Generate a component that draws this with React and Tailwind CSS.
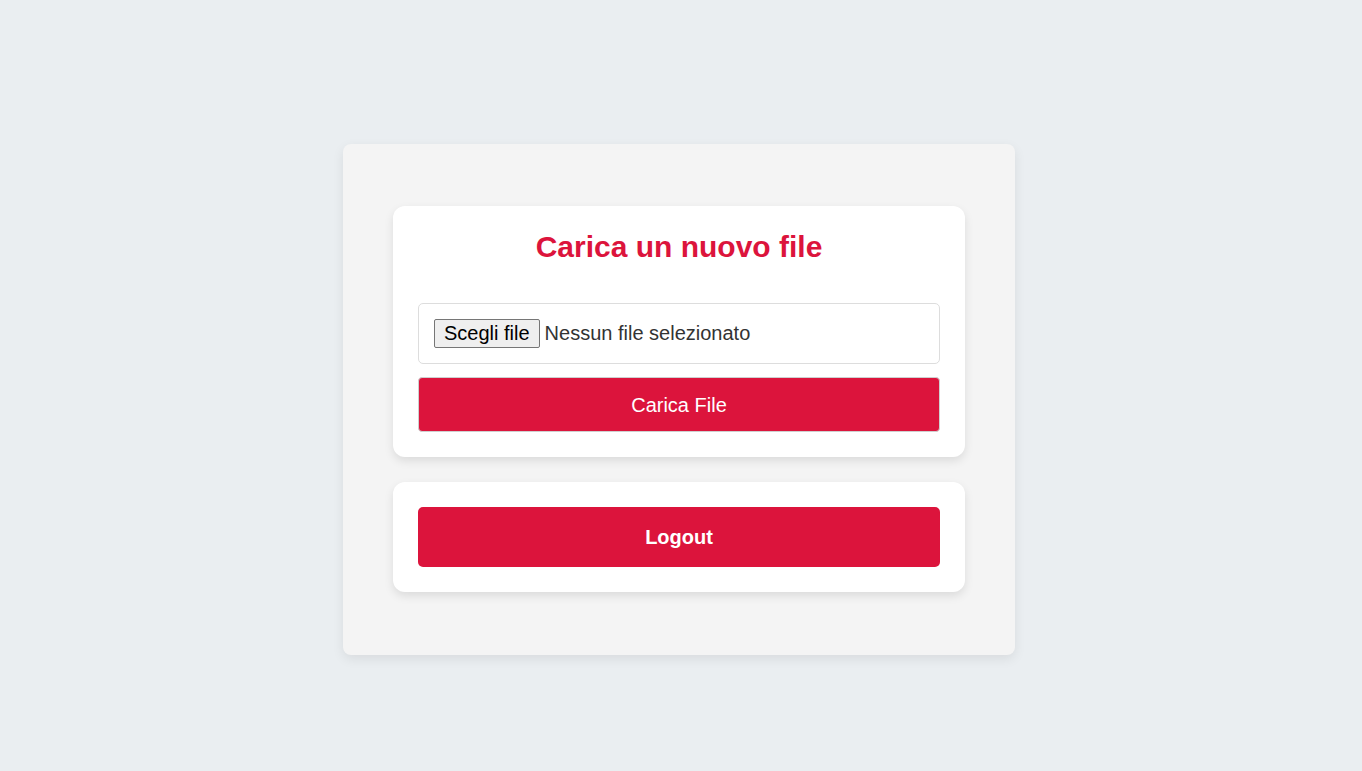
import React, { useRef, useState } from 'react'

const App = () => {
  const fileRef = useRef(null)
  const [fileName, setFileName] = useState('')

  return (
    <div
      className="min-h-[771px] bg-[#eaeef1] flex justify-center pt-[144px] pr-[4px]"
      style={{ fontFamily: '"Liberation Sans", Arial, sans-serif' }}
    >
      <div className="w-[672px] h-[511px] bg-[#f4f4f4] rounded-[8px] shadow-[0_4px_12px_rgba(0,0,0,0.08)] px-[50px] pt-[62px]">
        <div className="bg-white rounded-[12px] shadow-[0_4px_10px_rgba(0,0,0,0.1)] p-[25px]">
          <h2 className="text-[30px] leading-[32px] font-bold text-[#dc143c] text-center mb-[40px]">
            Carica un nuovo file
          </h2>
          <form onSubmit={(e) => e.preventDefault()}>
            <div className="flex items-center w-full bg-white border border-[#dddddd] rounded-[5px] p-[15px]">
              <input
                ref={fileRef}
                type="file"
                className="hidden"
                onChange={(e) => setFileName(e.target.files[0] ? e.target.files[0].name : '')}
              />
              <button
                type="button"
                onClick={() => fileRef.current && fileRef.current.click()}
                className="h-[29px] px-[9px] text-[20px] leading-[23px] text-black bg-[#efefef] border border-[#767676] rounded-[2px]"
              >
                Scegli file
              </button>
              <span className="ml-[5px] text-[20px] leading-[23px] text-[#333]">
                {fileName || 'Nessun file selezionato'}
              </span>
            </div>
            <button
              type="submit"
              className="mt-[13px] w-full h-[55px] bg-[#dc143c] text-white text-[20px] border border-[#cfcfcf] rounded-[4px]"
            >
              Carica File
            </button>
          </form>
        </div>
        <div className="mt-[25px] bg-white rounded-[12px] shadow-[0_4px_10px_rgba(0,0,0,0.1)] p-[25px]">
          <button
            type="button"
            className="w-full h-[60px] bg-[#dc143c] text-white text-[20px] font-bold rounded-[5px]"
          >
            Logout
          </button>
        </div>
      </div>
    </div>
  )
}

export default App
